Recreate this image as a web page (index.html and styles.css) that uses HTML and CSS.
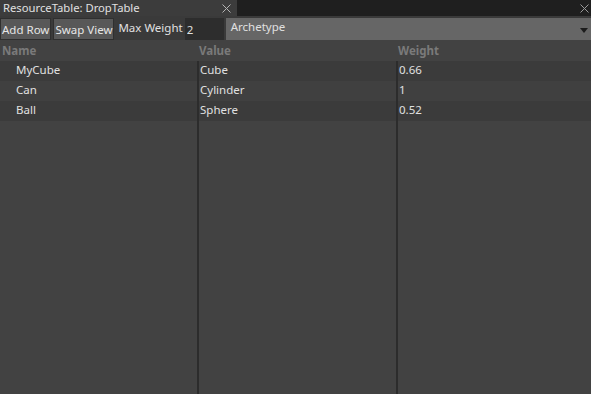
FILE: index.html
```html
<!DOCTYPE html>
<html lang="en">
<head>
  <meta charset="UTF-8" />
  <title>ResourceTable: DropTable</title>
  <link rel="stylesheet" href="styles.css">
</head>
<body>
  <div class="tabbar">
    <div class="tab active">
      <span class="tab-title">ResourceTable: DropTable</span>
      <svg class="tab-close" width="9" height="9" viewBox="0 0 9 9"><path d="M0.5 0.5L8.5 8.5M8.5 0.5L0.5 8.5" stroke="#b4b4b4" stroke-width="1"/></svg>
    </div>
    <div class="tab-rest">
      <svg class="tab-close" width="9" height="9" viewBox="0 0 9 9"><path d="M0.5 0.5L8.5 8.5M8.5 0.5L0.5 8.5" stroke="#9a9a9a" stroke-width="1"/></svg>
    </div>
  </div>

  <div class="toolbar">
    <button class="btn">Add Row</button>
    <button class="btn">Swap View</button>
    <span class="label">Max Weight</span>
    <input class="num" value="2" />
    <div class="select">
      <span>Archetype</span>
      <span class="arrow"></span>
    </div>
  </div>

  <div class="table">
    <div class="head">
      <div class="cell">Name</div>
      <div class="cell">Value</div>
      <div class="cell">Weight</div>
    </div>
    <div class="body">
      <div class="col">
        <div class="row odd"><span class="indent">MyCube</span></div>
        <div class="row"><span class="indent">Can</span></div>
        <div class="row odd"><span class="indent">Ball</span></div>
      </div>
      <div class="col">
        <div class="row odd">Cube</div>
        <div class="row">Cylinder</div>
        <div class="row odd">Sphere</div>
      </div>
      <div class="col">
        <div class="row odd">0.66</div>
        <div class="row">1</div>
        <div class="row odd">0.52</div>
      </div>
    </div>
  </div>
</body>
</html>
```

FILE: styles.css
```css
* { box-sizing: border-box; margin: 0; padding: 0; }

html, body { height: 100%; }

body {
  font-family: 'Noto Sans', 'Open Sans', sans-serif;
  font-size: 11.5px;
  color: #e0e0e0;
  background: #424242;
  overflow: hidden;
  display: flex;
  flex-direction: column;
}

/* tabs */
.tabbar {
  display: flex;
  height: 16px;
  background: #1f1f1f;
}

.tab {
  display: flex;
  align-items: center;
  justify-content: space-between;
  width: 237px;
  padding: 0 6px 0 3px;
  background: #3c3c3c;
}

.tab-title {
  font-size: 11.25px;
  line-height: 16px;
}

.tab-close { display: block; }

.tab-rest {
  flex: 1;
  display: flex;
  align-items: center;
  justify-content: flex-end;
  padding-right: 2px;
}

/* toolbar */
.toolbar {
  display: flex;
  align-items: stretch;
  height: 24px;
  padding-top: 2px;
  background: #3a3a3a;
}

.btn {
  font: inherit;
  color: #e6e6e6;
  background: #585858;
  border: 1px solid #2f2f2f;
  padding: 0 1px;
  margin-right: 2px;
  height: 22px;
}

.label {
  line-height: 20px;
  padding: 0 2px 0 2px;
}

.num {
  font: inherit;
  color: #e0e0e0;
  background: #2d2d2d;
  border: none;
  width: 39px;
  height: 22px;
  padding: 0 2px;
  margin-right: 2px;
  outline: none;
}

.select {
  flex: 1;
  display: flex;
  justify-content: space-between;
  align-items: center;
  background: #666666;
  height: 22px;
  padding: 0 3px 5px 5px;
}

.arrow {
  width: 0;
  height: 0;
  margin-top: 8px;
  border-left: 4px solid transparent;
  border-right: 4px solid transparent;
  border-top: 5px solid #1c1c1c;
}

/* table */
.table {
  flex: 1;
  display: flex;
  flex-direction: column;
  background: #424242;
}

.head {
  display: grid;
  grid-template-columns: 197px 199px 1fr;
  height: 21px;
  padding-top: 2px;
}

.head .cell {
  color: #7a7a7a;
  font-weight: bold;
  padding-left: 2px;
  line-height: 18px;
}

.body {
  flex: 1;
  display: grid;
  grid-template-columns: 197px 199px 1fr;
}

.col {
  border-left: 2px solid #2c2c2c;
}

.col:first-child { border-left: none; }

.row {
  height: 20px;
  line-height: 17px;
  padding-left: 1px;
  background: #404040;
}

.row.odd { background: #3b3b3b; }

.indent { padding-left: 15px; }
```
